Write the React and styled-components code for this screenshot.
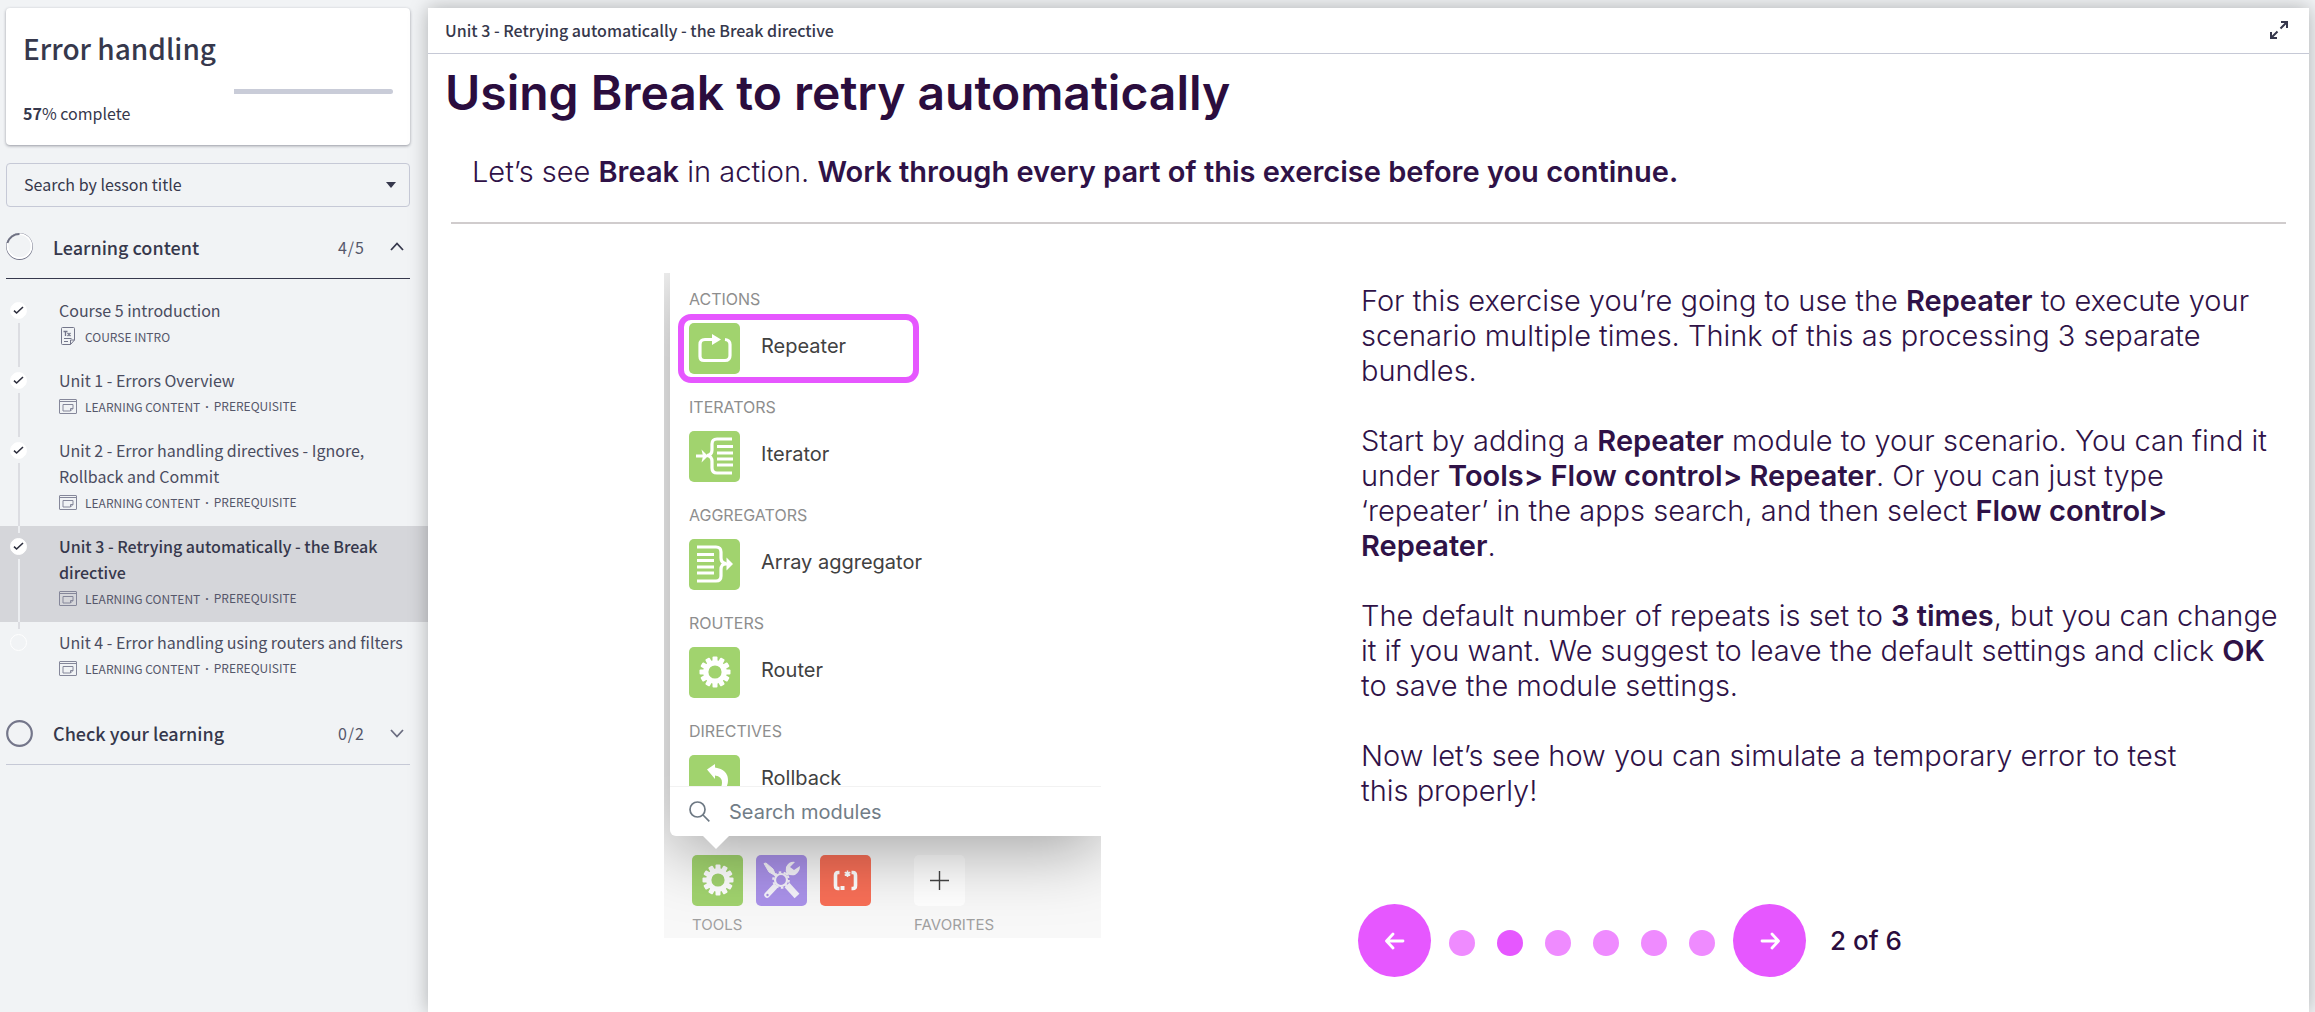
import React from "react";
import styled, { createGlobalStyle, css } from "styled-components";

const ui = `"Noto Sans CJK SC", "Open Sans", sans-serif`;
const body = `Inter, "Liberation Sans", sans-serif`;

const GlobalStyle = createGlobalStyle`
  * { box-sizing: border-box; }
  body { margin: 0; background: #f1f3f5; font-family: ${ui}; color: #36384c; }
  h1, h2, h3, p, ul { margin: 0; padding: 0; }
  button, input, select { font: inherit; color: inherit; }
`;

const Page = styled.div`
  display: grid;
  grid-template-columns: 428px minmax(0, 1fr);
  min-height: 100vh;
  padding: 8px 6px 0 0;
  overflow: hidden;
`;

const Sidebar = styled.nav`
  display: flex;
  flex-direction: column;
`;

const CourseCard = styled.section`
  margin: 0 18px 18px 6px;
  height: 137px;
  padding: 16px 17px 0;
  background: #fff;
  border-radius: 4px;
  box-shadow: 0 1px 3px rgba(40, 42, 60, 0.45);
`;

const CourseTitle = styled.h1`
  font-size: 28px;
  line-height: 48px;
  font-weight: 500;
`;

const Progress = styled.div`
  display: flex;
  justify-content: flex-end;
  height: 5px;
  margin-top: 17px;
  border-radius: 3px;
  overflow: hidden;
`;

const Remaining = styled.div`
  background: #c9ccd8;
`;

const ProgressText = styled.p`
  margin-top: 5px;
  font-size: 16px;
  line-height: 28px;
  b { font-weight: 700; }
`;

const SelectWrap = styled.label`
  display: flex;
  align-items: center;
  margin: 0 18px 0 6px;
  height: 44px;
  padding-right: 13px;
  border: 1px solid #c6c9d6;
  border-radius: 4px;
`;

const LessonSelect = styled.select`
  flex: 1;
  height: 42px;
  padding: 0 17px 2px;
  border: 0;
  background: transparent;
  appearance: none;
  font-size: 16px;
  outline: none;
`;

const SectionButton = styled.button`
  display: grid;
  grid-template-columns: 28px 1fr auto 14px;
  align-items: center;
  margin: 0 18px 0 6px;
  height: ${(p) => (p.$open ? 72 : 63)}px;
  padding: ${(p) => (p.$open ? "8px 6px 0 0" : "0 6px 0 0")};
  border: 0;
  border-bottom: 1px solid ${(p) => (p.$open ? "#36384c" : "#c6c9d6")};
  background: transparent;
  text-align: left;
`;

const SectionName = styled.span`
  padding-left: 19px;
  font-size: 18px;
  line-height: 28px;
  font-weight: 500;
`;

const SectionCount = styled.span`
  padding-right: 25px;
  font-size: 16px;
  letter-spacing: 1px;
  color: #55576a;
`;

const LessonList = styled.ul`
  list-style: none;
  padding-top: 11px;
  margin-bottom: 10px;
`;

const Lesson = styled.li`
  display: grid;
  grid-template-columns: 17px 1fr;
  column-gap: 32px;
  padding: 0 18px 0 10px;
  background: ${(p) => (p.$active ? "#d5d6da" : "transparent")};
`;

const Track = styled.div`
  display: flex;
  flex-direction: column;
  align-items: center;
`;

const Segment = styled.div`
  width: 2px;
  ${(p) => (p.$top ? css`height: 7px; margin-bottom: 5px;` : css`flex: 1; margin-top: 4px;`)}
  background: ${(p) => (p.$hidden ? "transparent" : p.$light ? "#eceef1" : "#dcdde2")};
`;

const Marker = styled.span`
  display: flex;
  align-items: center;
  justify-content: center;
  width: 17px;
  height: 17px;
  border-radius: 50%;
  border: 1px solid #fff;
  background: ${(p) => (p.$done ? "#fff" : "transparent")};
`;

const LessonLink = styled.a`
  display: block;
  padding: 7px 0 11px;
  color: ${(p) => (p.$active ? "#36384c" : "#4a4c5f")};
  text-decoration: none;
`;

const LessonTitle = styled.span`
  display: block;
  font-size: 16px;
  line-height: 26px;
  font-weight: ${(p) => (p.$active ? 500 : 400)};
`;

const Meta = styled.span`
  display: flex;
  align-items: center;
  gap: 8px;
  height: 26px;
  font-size: 12px;
  color: #55576a;
`;

const MetaPart = styled.span`
  & + &::before {
    content: "·";
    margin: 0 5px 0 -3px;
    font-family: "Open Sans", sans-serif;
    font-weight: 700;
  }
`;

const Panel = styled.main`
  display: flex;
  flex-direction: column;
  background: #fff;
  box-shadow: 0 0 18px rgba(0, 0, 0, 0.28);
`;

const PanelHeader = styled.header`
  display: flex;
  align-items: center;
  justify-content: space-between;
  height: 46px;
  padding: 0 19px 2px 17px;
  border-bottom: 1px solid #c6c9d6;
`;

const PanelTitle = styled.h2`
  font-size: 16px;
  line-height: 24px;
  font-weight: 500;
`;

const IconButton = styled.button`
  display: flex;
  padding: 2px;
  border: 0;
  background: transparent;
`;

const Headline = styled.h2`
  padding: 9px 17px 0;
  font: 600 48px/60px ${body};
  color: #2b0d3e;
`;

const Intro = styled.p`
  padding: 31px 44px 0;
  font: 300 29px/36px ${body};
  color: #2f1247;
  b { font-weight: 600; }
`;

const Rule = styled.hr`
  width: auto;
  height: 2px;
  margin: 32px 23px 0;
  border: 0;
  background: #d0cccd;
`;

const Columns = styled.div`
  display: grid;
  grid-template-columns: 863fr 925fr;
  column-gap: 47px;
  padding: 0 23px;
`;

const Shot = styled.figure`
  justify-self: center;
  width: 437px;
  margin: 49px 0 0;
  background: #f8f8f8;
  overflow: hidden;
  font-family: ${body};
  align-self: start;
`;

const Picker = styled.div`
  position: relative;
  z-index: 1;
  margin-left: 6px;
  border-bottom-left-radius: 6px;
  background: #fff;
  box-shadow: 0 12px 70px rgba(0, 0, 0, 0.36);
`;

const ModuleList = styled.div`
  height: 513px;
  padding: 12px 0 0 19px;
  overflow: hidden;
`;

const Group = styled.section`
  height: 108px;
`;

const GroupName = styled.h3`
  font-size: 16px;
  line-height: 28px;
  font-weight: 400;
  color: #8e8e8e;
`;

const ModuleRow = styled.div`
  position: relative;
  display: flex;
  align-items: center;
  gap: 21px;
  margin-top: 10px;
`;

const ModuleName = styled.span`
  padding-bottom: 5px;
  font-size: 20px;
  line-height: 24px;
  color: #414141;
`;

const Highlight = styled.span`
  position: absolute;
  left: -11px;
  top: -9px;
  width: 241px;
  height: 69px;
  border: 6px solid #e657ff;
  border-radius: 13px;
`;

const Tile = styled.span`
  display: flex;
  flex: none;
  align-items: center;
  justify-content: center;
  width: 51px;
  height: 51px;
  padding: 0;
  border: 0;
  border-radius: 5px;
  background: ${(p) => p.$color};
`;

const SearchBar = styled.label`
  display: flex;
  align-items: center;
  gap: 19px;
  height: 50px;
  padding-left: 19px;
  border-top: 1px solid #f2f2f2;
  color: #6d7883;
`;

const SearchInput = styled.input`
  flex: 1;
  min-width: 0;
  padding: 0;
  border: 0;
  outline: none;
  background: transparent;
  font-size: 20px;
  &::placeholder { color: #727d87; opacity: 1; }
`;

const Pointer = styled.span`
  position: absolute;
  left: 33px;
  top: 100%;
  border: 13px solid transparent;
  border-top-color: #fff;
  border-bottom: 0;
`;

const Dock = styled.div`
  display: flex;
  gap: 43px;
  height: 102px;
  padding: 19px 0 0 28px;
`;

const DockGroup = styled.div`
  font-size: 15px;
  line-height: 24px;
  color: #a0a0a0;
`;

const DockTiles = styled.div`
  display: flex;
  gap: 13px;
  margin-bottom: 7px;
`;

const Article = styled.div`
  display: flex;
  flex-direction: column;
  gap: 35px;
  padding-top: 59px;
  font: 300 29px/35px ${body};
  color: #2f1247;
  b { font-weight: 600; }
`;

const Pager = styled.div`
  display: flex;
  align-items: center;
  margin: 96px 0 20px -3px;
  font: 500 26px/32px ${body};
  color: #2b0d3e;
`;

const RoundButton = styled.button`
  display: flex;
  align-items: center;
  justify-content: center;
  width: 73px;
  height: 73px;
  padding: 0;
  border: 0;
  border-radius: 50%;
  background: #e657ff;
`;

const Dots = styled.div`
  display: flex;
  gap: 22px;
  padding: 4px 18px 0;
`;

const Dot = styled.button`
  width: 26px;
  height: 26px;
  padding: 0;
  border: 0;
  border-radius: 50%;
  background: ${(p) => (p.$active ? "#e657ff" : "#ef8bff")};
`;

const PageCount = styled.span`
  padding-left: 24px;
`;

const GREEN = "#a1d36e";

const Check = () => (
  <svg width="11" height="9" viewBox="0 0 11 9" fill="none" stroke="#2d2f3e" strokeWidth="1.6">
    <path d="M1 4.6 3.6 7 10 1" />
  </svg>
);

const Chevron = ({ up }) => (
  <svg width="14" height="9" viewBox="0 0 14 9" fill="none" stroke={up ? "#36384c" : "#6b6d80"} strokeWidth="1.8">
    <path d={up ? "M1 8 7 1.5 13 8" : "M1 1 7 7.5 13 1"} />
  </svg>
);

const PartRing = () => (
  <svg width="27" height="27" viewBox="0 0 27 27" fill="none">
    <circle cx="13.5" cy="13.5" r="12.8" stroke="#74768a" strokeWidth="1.2" />
    <circle cx="13.5" cy="13.2" r="12" stroke="#fff" strokeWidth="1.8" />
    <path d="M1.4 10A12.4 12.4 0 0 1 13.5 1" stroke="#6f7183" strokeWidth="2" />
  </svg>
);

const EmptyRing = () => (
  <svg width="27" height="27" viewBox="0 0 27 27" fill="none">
    <circle cx="13.5" cy="13.5" r="12.3" stroke="#74768a" strokeWidth="2.2" />
  </svg>
);

const ContentIcon = () => (
  <svg width="18" height="15" viewBox="0 0 18 15" fill="none" stroke="#85879a">
    <rect x=".5" y=".5" width="17" height="14" rx=".5" />
    <path d="M.5 2.5h17M14 9.500V5.500H4V12h7.500M14 9.500 11.500 12V9.500z" />
  </svg>
);

const DocIcon = () => (
  <svg width="18" height="18" viewBox="0 0 18 18" fill="none" stroke="#74768a">
    <path d="M3.500.500h11a1 1 0 0 1 1 1V13L11.500 17.500h-8a1 1 0 0 1-1-1v-15a1 1 0 0 1 1-1zM15.500 13h-4v4.500M5 11.500h7.500M5 14.500h4" />
    <path d="M4.500 4.500h4M6.500 4.500V9M8.500 6l3 3M11.500 6l-3 3" strokeWidth="1.300" />
  </svg>
);

const Expand = () => (
  <svg width="18" height="18" viewBox="0 0 18 18" fill="none" stroke="#36384c" strokeWidth="2">
    <path d="M11 1h6v6M17 1l-6.500 6.500M1 11v6h6M1 17l6.500-6.500" />
  </svg>
);

const RepeaterIcon = () => (
  <svg width="51" height="51" viewBox="0 0 51 51" fill="none">
    <path d="M23 16.500h-7q-5 0-5 5v12q0 4 4 4h21q5 0 5-5v-11q0-4.500-5-5" stroke="#fff" strokeWidth="3.200" />
    <path d="M23 11v11l9-5.500z" fill="#fff" />
  </svg>
);

const IteratorIcon = ({ flip }) => (
  <svg width="51" height="51" viewBox="0 0 51 51" fill="none" stroke="#fff">
    {flip ? (
      <>
        <path d="M8 8h19q5 0 5 5v6q0 5 5 5.500-5 .5-5 6V37q0 5-5 5H8" strokeWidth="3.200" />
        <path d="M8 15.500h17M8 21.500h17M8 28h17M8 34h17" strokeWidth="3" />
        <path d="M34 25h6" strokeWidth="3" />
        <path d="M37.500 18.500 44 25l-6.500 6.500V25z" fill="#fff" stroke="none" />
      </>
    ) : (
      <>
        <path d="M43 8H28q-5 0-5 5v6q0 5-5 5.500 5 .5 5 6V37q0 5 5 5h15" strokeWidth="3.200" />
        <path d="M28 15.500h16M28 22h16M28 28h16M28 34h16" strokeWidth="3" />
        <path d="M7 25h8" strokeWidth="3" />
        <path d="M12.500 18.500 19 25l-6.500 6.500L14 25z" fill="#fff" stroke="none" />
      </>
    )}
  </svg>
);

const GearIcon = ({ size = 51 }) => (
  <svg width={size} height={size} viewBox="0 0 51 51">
    <g fill="#fff">
      {Array.from({ length: 12 }, (_, i) => (
        <rect key={i} x="23.500" y="9.500" width="5" height="8" rx="1" transform={`rotate(${i * 30} 26 25)`} />
      ))}
    </g>
    <circle cx="26" cy="25" r="9.200" fill="none" stroke="#fff" strokeWidth="5.200" />
  </svg>
);

const RollbackIcon = () => (
  <svg width="51" height="51" viewBox="0 0 51 51">
    <path d="M18 14.500 26 9v3.500q13 2 13 13 0 9-9 13-2 0-1-2 4-4 4-9 0-6-7-7v3.500z" fill="#fff" />
  </svg>
);

const KitIcon = () => (
  <svg width="51" height="51" viewBox="0 0 51 51" fill="none" stroke="#f5f3fb">
    <path d="M8 8.500 10 8l7 6 1.500 3.500L16.500 19 13 17z" fill="#f5f3fb" strokeWidth="1" />
    <path d="M16 17l5 4.500M30 20l5-5" strokeWidth="2.600" />
    <path d="M11 40 18.500 32" strokeWidth="5.500" strokeLinecap="round" />
    <path d="M31 30 41 41" strokeWidth="6.500" />
    <path d="M39 7q-6-1-9 5-1 4 1 7 4 2 8 1 5-3 5-9l-6 4-4-3z" fill="#f5f3fb" stroke="none" />
    <circle cx="25" cy="25" r="6" strokeWidth="2.200" />
    <circle cx="25" cy="25" r="7.800" strokeWidth="2" strokeDasharray="2.500 2.400" />
    <circle cx="11.500" cy="40" r="1.200" fill="#a78fe3" stroke="none" />
  </svg>
);

const RegexIcon = () => (
  <svg width="51" height="51" viewBox="0 0 51 51" fill="none" stroke="#fff">
    <path d="M19.500 17.500H18q-2.500 0-2.500 3v10q0 3 2.500 3h1.500M31.500 17.500H33q2.500 0 2.500 3v10q0 3-2.500 3h-1.500" strokeWidth="3.600" />
    <path d="M27.500 15.500v6.500M24.700 17.200l5.600 3.200M30.300 17.200l-5.600 3.200" strokeWidth="1.600" />
    <rect x="20.500" y="31" width="4" height="4" fill="#fff" stroke="none" />
  </svg>
);

const SearchIcon = () => (
  <svg width="21" height="21" viewBox="0 0 21 21" fill="none" stroke="#6d7883" strokeWidth="1.700">
    <circle cx="8.500" cy="8.500" r="7.500" />
    <path d="m14 14 6.300 6.300" />
  </svg>
);

const PlusIcon = () => (
  <svg width="19" height="19" viewBox="0 0 19 19" stroke="#444" strokeWidth="1.400">
    <path d="M9.500 0v19M0 9.500h19" />
  </svg>
);

const Arrow = ({ right }) => (
  <svg width="20" height="18" viewBox="0 0 20 18" fill="none" stroke="#fff" strokeWidth="2.800" strokeLinecap="round" strokeLinejoin="round">
    <path d={right ? "M2 9h16M12 2l6.500 7L12 16" : "M18 9H2M8 2 1.500 9 8 16"} />
  </svg>
);

const lessons = [
  { title: "Course 5 introduction", meta: ["COURSE INTRO"], done: true, doc: true },
  { title: "Unit 1 - Errors Overview", done: true },
  { title: "Unit 2 - Error handling directives - Ignore, Rollback and Commit", done: true },
  { title: "Unit 3 - Retrying automatically - the Break directive", done: true, active: true },
  { title: "Unit 4 - Error handling using routers and filters" },
];

const defaultMeta = ["LEARNING CONTENT", "PREREQUISITE"];

const modules = [
  { group: "ACTIONS", name: "Repeater", icon: <RepeaterIcon />, highlight: true },
  { group: "ITERATORS", name: "Iterator", icon: <IteratorIcon /> },
  { group: "AGGREGATORS", name: "Array aggregator", icon: <IteratorIcon flip /> },
  { group: "ROUTERS", name: "Router", icon: <GearIcon /> },
  { group: "DIRECTIVES", name: "Rollback", icon: <RollbackIcon /> },
];

const percent = 57;

export default function App() {
  return (
    <>
      <GlobalStyle />
      <Page>
        <Sidebar aria-label="Course">
          <CourseCard>
            <CourseTitle>Error handling</CourseTitle>
            <Progress>
              <Remaining style={{ width: `${100 - percent}%` }} />
            </Progress>
            <ProgressText><b>{percent}</b>% complete</ProgressText>
          </CourseCard>
          <SelectWrap>
            <LessonSelect aria-label="Search by lesson title">
              <option>Search by lesson title</option>
            </LessonSelect>
            <svg width="10" height="6" viewBox="0 0 10 6"><path d="M0 0h10L5 6z" fill="#36384c" /></svg>
          </SelectWrap>
          <SectionButton $open>
            <PartRing />
            <SectionName>Learning content</SectionName>
            <SectionCount>4/5</SectionCount>
            <Chevron up />
          </SectionButton>
          <LessonList>
            {lessons.map((l, i) => (
              <Lesson key={l.title} $active={l.active}>
                <Track>
                  <Segment $top $hidden={i === 0} $light={l.active} />
                  <Marker $done={l.done}>{l.done && <Check />}</Marker>
                  <Segment $hidden={i === lessons.length - 1} $light={l.active} />
                </Track>
                <LessonLink href="#" $active={l.active}>
                  <LessonTitle $active={l.active}>{l.title}</LessonTitle>
                  <Meta>
                    {l.doc ? <DocIcon /> : <ContentIcon />}
                    {(l.meta || defaultMeta).map((part) => (
                      <MetaPart key={part}>{part}</MetaPart>
                    ))}
                  </Meta>
                </LessonLink>
              </Lesson>
            ))}
          </LessonList>
          <SectionButton>
            <EmptyRing />
            <SectionName>Check your learning</SectionName>
            <SectionCount>0/2</SectionCount>
            <Chevron />
          </SectionButton>
        </Sidebar>

        <Panel>
          <PanelHeader>
            <PanelTitle>Unit 3 - Retrying automatically - the Break directive</PanelTitle>
            <IconButton aria-label="Expand"><Expand /></IconButton>
          </PanelHeader>
          <Headline>Using Break to retry automatically</Headline>
          <Intro>
            Let’s see <b>Break</b> in action. <b>Work through every part of this exercise before you continue.</b>
          </Intro>
          <Rule />
          <Columns>
            <Shot>
              <Picker>
                <ModuleList>
                  {modules.map((m) => (
                    <Group key={m.group}>
                      <GroupName>{m.group}</GroupName>
                      <ModuleRow>
                        {m.highlight && <Highlight />}
                        <Tile $color={GREEN}>{m.icon}</Tile>
                        <ModuleName>{m.name}</ModuleName>
                      </ModuleRow>
                    </Group>
                  ))}
                </ModuleList>
                <SearchBar>
                  <SearchIcon />
                  <SearchInput placeholder="Search modules" aria-label="Search modules" />
                </SearchBar>
                <Pointer />
              </Picker>
              <Dock>
                <DockGroup>
                  <DockTiles>
                    <Tile as="button" aria-label="Tools" $color={GREEN}><GearIcon /></Tile>
                    <Tile as="button" aria-label="Kit" $color="#aa92ea"><KitIcon /></Tile>
                    <Tile as="button" aria-label="Text parser" $color="#f86f57"><RegexIcon /></Tile>
                  </DockTiles>
                  TOOLS
                </DockGroup>
                <DockGroup>
                  <DockTiles>
                    <Tile as="button" aria-label="Add favorite" $color="#fff"><PlusIcon /></Tile>
                  </DockTiles>
                  FAVORITES
                </DockGroup>
              </Dock>
            </Shot>
            <div>
              <Article>
                <p>
                  For this exercise you’re going to use the <b>Repeater</b> to execute your scenario multiple
                  times. Think of this as processing 3 separate bundles.
                </p>
                <p>
                  Start by adding a <b>Repeater</b> module to your scenario. You can find it under{" "}
                  <b>Tools&gt; Flow control&gt; Repeater</b>. Or you can just type ‘repeater’ in the apps search,
                  and then select <b>Flow control&gt; Repeater</b>.
                </p>
                <p>
                  The default number of repeats is set to <b>3 times</b>, but you can change it if you want. We
                  suggest to leave the default settings and click <b>OK</b> to save the module settings.
                </p>
                <p>Now let’s see how you can simulate a temporary error to test this{"\u00a0"}properly!</p>
              </Article>
              <Pager>
                <RoundButton aria-label="Previous"><Arrow /></RoundButton>
                <Dots>
                  {[1, 2, 3, 4, 5, 6].map((n) => (
                    <Dot key={n} $active={n === 2} aria-label={`Step ${n}`} />
                  ))}
                </Dots>
                <RoundButton aria-label="Next"><Arrow right /></RoundButton>
                <PageCount>2 of 6</PageCount>
              </Pager>
            </div>
          </Columns>
        </Panel>
      </Page>
    </>
  );
}
